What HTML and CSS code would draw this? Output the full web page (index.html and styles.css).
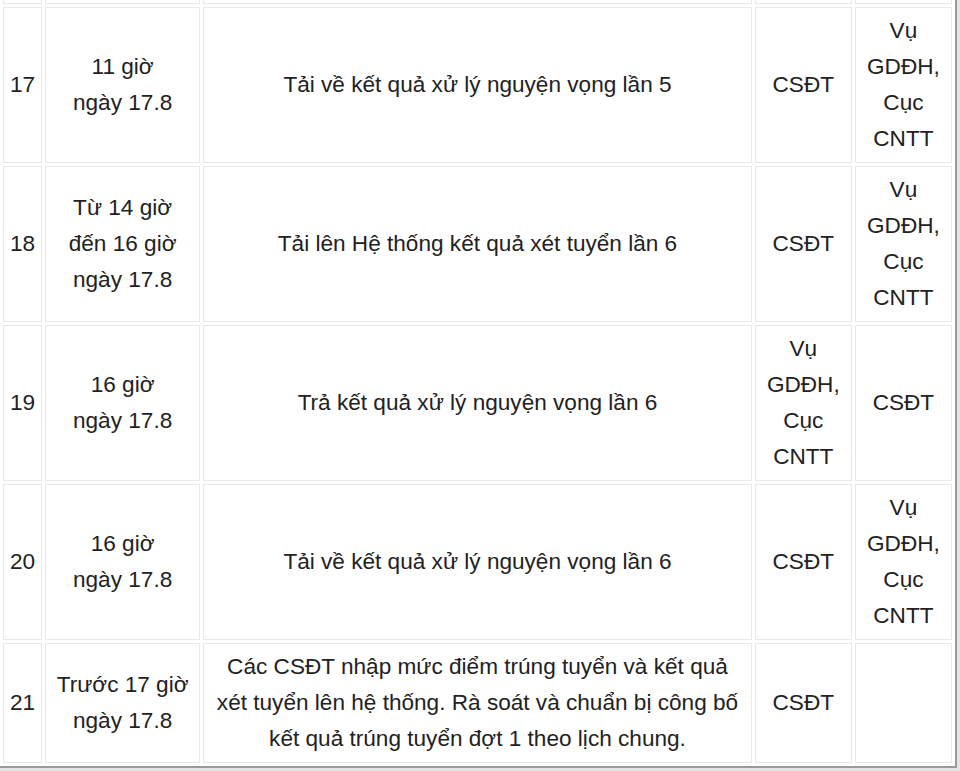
FILE: index.html
```html
<!DOCTYPE html>
<html lang="vi">
<head>
<meta charset="utf-8">
<title>Lịch xét tuyển</title>
<link rel="stylesheet" href="styles.css">
</head>
<body>
<div class="page">
<table class="schedule">
  <colgroup>
    <col class="c-no">
    <col class="c-time">
    <col class="c-task">
    <col class="c-do">
    <col class="c-sup">
  </colgroup>
  <tbody>
    <tr class="partial"><td></td><td></td><td></td><td></td><td></td></tr>
    <tr class="r4">
      <td>17</td>
      <td>11 giờ<br>ngày 17.8</td>
      <td>Tải về kết quả xử lý nguyện vọng lần 5</td>
      <td>CSĐT</td>
      <td>Vụ GDĐH, Cục CNTT</td>
    </tr>
    <tr class="r4">
      <td>18</td>
      <td>Từ 14 giờ<br>đến 16 giờ<br>ngày 17.8</td>
      <td>Tải lên Hệ thống kết quả xét tuyển lần 6</td>
      <td>CSĐT</td>
      <td>Vụ GDĐH, Cục CNTT</td>
    </tr>
    <tr class="r4">
      <td>19</td>
      <td>16 giờ<br>ngày 17.8</td>
      <td>Trả kết quả xử lý nguyện vọng lần 6</td>
      <td>Vụ GDĐH, Cục CNTT</td>
      <td>CSĐT</td>
    </tr>
    <tr class="r4">
      <td>20</td>
      <td>16 giờ<br>ngày 17.8</td>
      <td>Tải về kết quả xử lý nguyện vọng lần 6</td>
      <td>CSĐT</td>
      <td>Vụ GDĐH, Cục CNTT</td>
    </tr>
    <tr>
      <td>21</td>
      <td>Trước 17 giờ<br>ngày 17.8</td>
      <td>Các CSĐT nhập mức điểm trúng tuyển và kết quả xét tuyển lên hệ thống. Rà soát và chuẩn bị công bố kết quả trúng tuyển đợt 1 theo lịch chung.</td>
      <td>CSĐT</td>
      <td></td>
    </tr>
  </tbody>
</table>
</div>
</body>
</html>
```
FILE: styles.css
```css
html, body {
  margin: 0;
  padding: 0;
  background: #ffffff;
}
.page {
  height: 771px;
  overflow: hidden;
  background: #e4e4e4;
}
.schedule {
  margin-top: -3px;
  border-collapse: separate;
  border-spacing: 3px;
  table-layout: fixed;
  width: 957px;
  background: #ffffff;
  border-right: 2px solid #9a9a9a;
  border-bottom: 2px solid #9a9a9a;
  font-family: "Liberation Sans", Arial, Helvetica, sans-serif;
  font-size: 22.6px;
  line-height: 36px;
  color: #222222;
}
.c-no { width: 39px; }
.c-time { width: 155px; }
.c-task { width: 548px; }
.c-do { width: 97px; }
.c-sup { width: 97px; }
.schedule td {
  border: 1px solid #e9e9e9;
  padding: 5px 5px;
  text-align: center;
  vertical-align: middle;
}
.schedule td:first-child {
  padding: 5px 2px;
}
.schedule .partial td {
  border-top: 0;
  padding: 0;
  height: 3px;
  line-height: 0;
}
.schedule .r4 td {
  height: 144px;
}
```
